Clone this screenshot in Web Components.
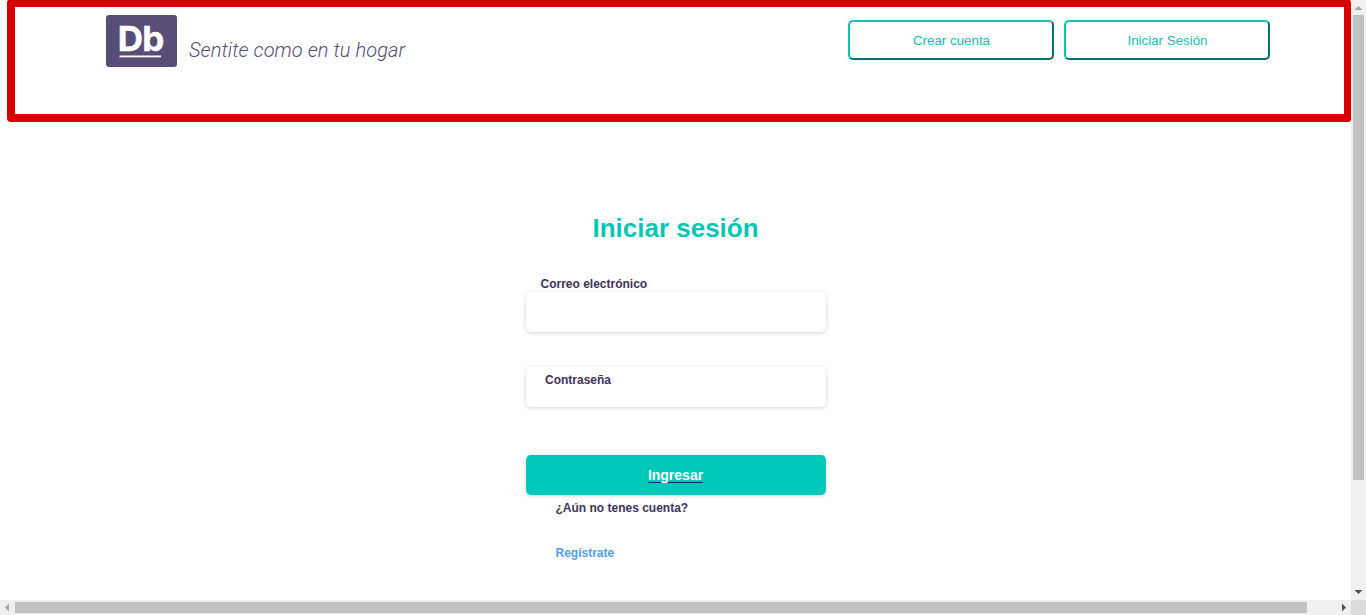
<!DOCTYPE html>
<html lang="es">
<head>
<meta charset="utf-8">
<title>Iniciar sesión</title>
<style>
html,body{margin:0;height:100%;overflow:hidden;background:#fff}
body{font-family:"Liberation Sans",Arial,sans-serif}
</style>
</head>
<body>
<app-window>
  <site-header>
    <brand-logo slot="brand">Sentite como en tu hogar</brand-logo>
    <outline-button>Crear cuenta</outline-button>
    <outline-button>Iniciar Sesión</outline-button>
  </site-header>
  <login-form></login-form>
</app-window>
<script>
const define = (name, html) => customElements.define(name, class extends HTMLElement {
  constructor() {
    super();
    this.attachShadow({ mode: 'open' }).innerHTML = html;
  }
});

define('scroll-bar', `
<style>
:host{display:flex;background:#f0f0f0;box-sizing:border-box}
svg{display:block;flex:none;width:15px;height:15px}
.track{flex:1;display:flex}
.thumb{background:#c1c1c1}
:host([axis=y]){flex-direction:column}
:host([axis=y]) .thumb{width:11px;margin:0 2px;height:465px}
:host([axis=x]) .thumb{height:11px;margin:2px 0;width:1292px}
:host([axis=y]) .h,:host([axis=x]) .v{display:none}
</style>
<svg class="v"><path d="M3.500 10h8L7.500 6z" fill="#a3a3a3"/></svg>
<svg class="h"><path d="M9 3.500v8L5 7.500z" fill="#a3a3a3"/></svg>
<div class="track"><div class="thumb"></div></div>
<svg class="v"><path d="M3.500 5h8L7.500 9z" fill="#505050"/></svg>
<svg class="h"><path d="M6 3.500v8L10 7.500z" fill="#505050"/></svg>`);

define('app-window', `
<style>
:host{display:grid;grid-template:600px 15px / 1351px 15px;width:1366px;height:615px;overflow:hidden}
.page{overflow:hidden;background:#fff}
.corner{background:#dcdcdc}
</style>
<div class="page"><slot></slot></div>
<scroll-bar axis="y"></scroll-bar>
<scroll-bar axis="x"></scroll-bar>
<div class="corner"></div>`);

define('site-header', `
<style>
:host{display:flex;justify-content:space-between;align-items:flex-start;box-sizing:border-box;
  width:1344px;height:123px;margin:-1px 0 0 7px;padding:8px 74px 0 91px;border:8px solid #d60000;border-right-width:7px;border-radius:4px 4px 3px 4px}
nav{display:flex;gap:10px;padding-top:5px}
</style>
<slot name="brand"></slot>
<nav><slot></slot></nav>`);

define('brand-logo', `
<style>
:host{display:flex;align-items:flex-start;color:#554d76}
svg{display:block;width:71px;height:52px}
text{font-family:Inter,"Liberation Sans",sans-serif;font-weight:700;font-size:34px;letter-spacing:-.8px;fill:#fff;stroke:#fff;stroke-width:.5px}
span{font:italic 300 20px/24px Roboto,sans-serif;letter-spacing:.08px;margin:23px 0 0 12px;white-space:nowrap}
</style>
<svg viewBox="0 0 71 52"><rect width="71" height="52" rx="3" fill="#584d76"/>
<text transform="translate(11.800 35.500) scale(1.030 1)">Db</text>
<rect x="13.500" y="40.500" width="41.500" height="1.800" fill="#fff"/></svg>
<span><slot></slot></span>`);

define('outline-button', `
<style>
:host{display:block}
button{display:block;box-sizing:border-box;width:206px;height:40px;margin:0;padding:0 0 0 1px;background:#fff;
  border:2px outset #02c8b8;border-radius:5px;color:#10bfb0;font:13.333px "Liberation Sans",Arial,sans-serif}
</style>
<button><slot></slot></button>`);

define('text-field', `
<style>
:host{display:block}
input{display:block;box-sizing:border-box;width:300px;height:40px;margin:0;border:0;outline:0;padding:0 14px;
  border-radius:5px;background:#fff;box-shadow:0 1px 4px rgba(0,0,0,.17)}
</style>
<input>`);

define('login-form', `
<style>
:host{display:flex;flex-direction:column;width:300px;margin:91px 0 0 525.5px;color:#3d3359;font-weight:700;font-size:12px;line-height:14px}
h1{margin:0 -20px;text-align:center;font-size:26px;line-height:30px;color:#09c5b5}
label{display:block}
.email{margin:34px 0 1px 15px}
.password{display:grid;margin-top:35px}
.password>*{grid-area:1/1}
.password label{z-index:1;margin:6px 0 0 19.5px}
a.submit{display:flex;align-items:center;justify-content:center;height:40px;margin-top:48px;border-radius:5px;background:#00c8b8;
  color:#fff;text-decoration:underline #00238b 1px;text-underline-offset:2px;font-size:14px;box-shadow:0 1px 4px rgba(0,0,0,.17)}
p{margin:6px 0 0 30px}
.register{margin:31px 0 0 30px;color:#559fe6}
</style>
<h1>Iniciar sesión</h1>
<label class="email">Correo electrónico</label>
<text-field></text-field>
<div class="password"><text-field></text-field><label>Contraseña</label></div>
<a class="submit"><span>Ingresar</span></a>
<p>¿Aún no tenes cuenta?</p>
<a class="register">Regístrate</a>`);
</script>
</body>
</html>
